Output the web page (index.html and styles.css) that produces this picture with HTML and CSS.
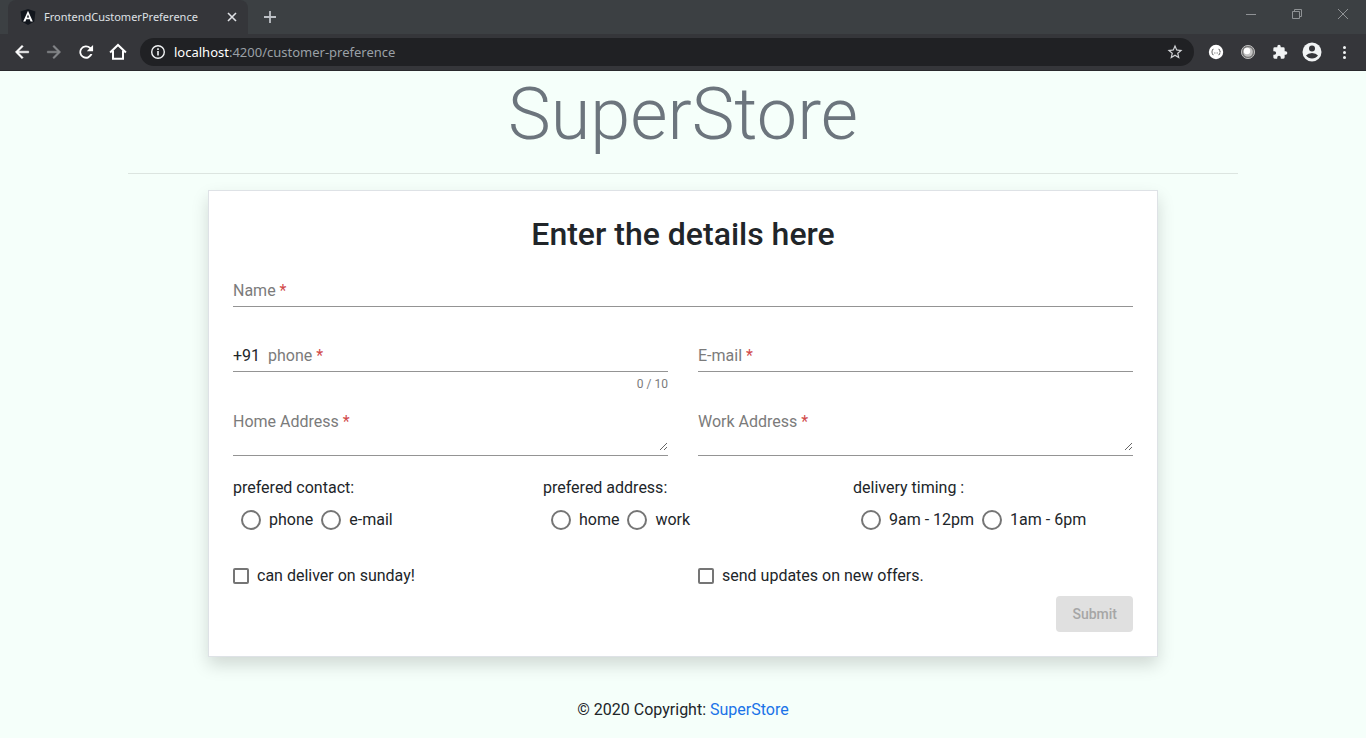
FILE: index.html
```html
<!DOCTYPE html>
<html lang="en">
<head>
<meta charset="utf-8">
<title>FrontendCustomerPreference</title>
<link rel="stylesheet" href="styles.css">
</head>
<body>
<header class="browser">
  <div class="tabstrip">
    <div class="tab">
      <svg class="favicon" viewBox="0 0 16 16" width="16" height="16" aria-hidden="true"><path d="M8 0l7.400 2.600-1.100 9.800L8 16l-6.300-3.600L.6 2.600z" fill="#12161d"/><path d="M8 1.800L3.200 12.400h2.200l.9-2.200h3.400l.9 2.200h2.200zM8 5.500l1.100 3H6.900z" fill="#fff"/></svg>
      <span class="tab-title">FrontendCustomerPreference</span>
      <button class="tab-close" aria-label="Close tab"><svg viewBox="0 0 16 16" width="16" height="16"><path d="M4 4l8 8M12 4l-8 8" stroke="#dfe1e5" stroke-width="1.600"/></svg></button>
    </div>
    <button class="new-tab" aria-label="New tab"><svg viewBox="0 0 16 16" width="16" height="16"><path d="M8 2v12M2 8h12" stroke="#bdc1c6" stroke-width="1.800"/></svg></button>
    <div class="window-controls">
      <button aria-label="Minimize"><svg viewBox="0 0 12 12" width="12" height="12"><path d="M1 6.500h10" stroke="#8f9295"/></svg></button>
      <button aria-label="Restore"><svg viewBox="0 0 12 12" width="12" height="12" fill="none" stroke="#8f9295"><path d="M1.500 3.500h7v7h-7zM3.500 3.500v-2h7v7h-2"/></svg></button>
      <button aria-label="Close"><svg viewBox="0 0 12 12" width="12" height="12"><path d="M1 1l10 10M11 1L1 11" stroke="#8f9295"/></svg></button>
    </div>
  </div>
  <div class="toolbar">
    <nav class="nav-buttons">
      <button aria-label="Back"><svg viewBox="0 0 24 24" width="20" height="20"><path fill="#fff" stroke="#fff" stroke-width=".6" d="M20 11H7.800l5.600-5.600L12 4l-8 8 8 8 1.400-1.400L7.800 13H20z"/></svg></button>
      <button aria-label="Forward"><svg viewBox="0 0 24 24" width="20" height="20"><path fill="#85878a" stroke="#85878a" stroke-width=".6" d="M12 4l-1.400 1.400 5.600 5.600H4v2h12.200l-5.600 5.600L12 20l8-8z"/></svg></button>
      <button aria-label="Reload"><svg viewBox="0 0 24 24" width="20" height="20"><path fill="#fff" d="M17.650 6.350A8 8 0 1 0 19.700 14.500h-2.500A5.800 5.800 0 1 1 16.100 7.900L13 11h7.500V3.500z"/></svg></button>
      <button aria-label="Home"><svg viewBox="0 0 24 24" width="20" height="20"><path fill="none" stroke="#fff" stroke-width="2.400" stroke-linejoin="miter" d="M2.500 12.500L12 3.500l9.500 9M6 10.500V20h12v-9.500"/></svg></button>
    </nav>
    <div class="omnibox">
      <svg viewBox="0 0 16 16" width="16" height="16" aria-hidden="true"><circle cx="8" cy="8" r="6.300" fill="none" stroke="#f1f3f4" stroke-width="1.400"/><path d="M8 7v4.500M8 4.300V6" stroke="#f1f3f4" stroke-width="1.600"/></svg>
      <span class="url"><span class="host">localhost</span>:4200/customer-preference</span>
      <button aria-label="Bookmark this tab"><svg viewBox="0 0 24 24" width="18" height="18"><path fill="#d2d4d7" d="M22 9.240l-7.190-.62L12 2 9.190 8.630 2 9.240l5.460 4.730L5.820 21 12 17.270 18.180 21l-1.630-7.030L22 9.240zM12 15.400l-3.760 2.270 1-4.280-3.320-2.880 4.380-.38L12 6.100l1.710 4.040 4.380.38-3.320 2.880 1 4.280L12 15.400z"/></svg></button>
    </div>
    <div class="extensions">
      <button aria-label="JSON viewer"><svg viewBox="0 0 16 16" width="16" height="16"><circle cx="8" cy="8" r="7.200" fill="#fff"/><path d="M5.500 5.200q-1.200 0-1.200 1.200v.8l-.8.8.8.8v.8q0 1.200 1.200 1.200M10.500 5.200q1.200 0 1.200 1.200v.8l.8.8-.8.8v.8q0 1.200-1.200 1.200" fill="none" stroke="#333" stroke-width=".8"/><path d="M6 9h4" stroke="#777" stroke-width=".8" stroke-dasharray="1 .5"/></svg></button>
      <button aria-label="Extension"><svg viewBox="0 0 16 16" width="16" height="16"><circle cx="8" cy="8" r="6.600" fill="#777" stroke="#b9b9b9"/><circle cx="8" cy="8" r="4.800" fill="#c4c4c4"/><circle cx="7" cy="7" r="3.200" fill="#fff"/></svg></button>
      <button aria-label="Extensions"><svg viewBox="0 0 24 24" width="16" height="16"><path fill="#f1f3f4" d="M20.500 11H19V7a2 2 0 0 0-2-2h-4V3.500a2.500 2.500 0 0 0-5 0V5H4a2 2 0 0 0-2 2v3.800h1.500a2.700 2.700 0 0 1 0 5.400H2V20a2 2 0 0 0 2 2h3.800v-1.500a2.700 2.700 0 0 1 5.400 0V22H17a2 2 0 0 0 2-2v-4h1.500a2.500 2.500 0 0 0 0-5z"/></svg></button>
      <button aria-label="Profile"><svg viewBox="0 0 20 20" width="20" height="20"><circle cx="10" cy="10" r="9.500" fill="#f1f3f4"/><circle cx="10" cy="6.500" r="3" fill="#35363a"/><path d="M4 13.500q2-2.500 6-2.500t6 2.500q-2.200 3-6 3t-6-3z" fill="#35363a"/></svg></button>
      <button aria-label="Menu"><svg viewBox="0 0 16 16" width="16" height="16" fill="#f1f3f4"><circle cx="8.500" cy="3.500" r="1.500"/><circle cx="8.500" cy="8.500" r="1.500"/><circle cx="8.500" cy="13.500" r="1.500"/></svg></button>
    </div>
  </div>
</header>

<main class="container">
  <h1 class="brand">SuperStore</h1>
  <hr class="rule">
  <form class="card">
    <h2 class="card-title">Enter the details here</h2>

    <div class="field">
      <div class="control">
        <label for="name">Name <span class="required">*</span></label>
        <input id="name" type="text">
      </div>
    </div>

    <div class="halves">
      <div class="field">
        <div class="control with-prefix">
          <span class="prefix">+91</span>
          <label for="phone">phone <span class="required">*</span></label>
          <input id="phone" type="tel" maxlength="10">
        </div>
        <div class="hint">0 / 10</div>
      </div>
      <div class="field">
        <div class="control">
          <label for="email">E-mail <span class="required">*</span></label>
          <input id="email" type="email">
        </div>
      </div>
    </div>

    <div class="halves">
      <div class="field">
        <div class="control area">
          <label for="home-address">Home Address <span class="required">*</span></label>
          <textarea id="home-address" rows="2"></textarea>
        </div>
      </div>
      <div class="field">
        <div class="control area">
          <label for="work-address">Work Address <span class="required">*</span></label>
          <textarea id="work-address" rows="2"></textarea>
        </div>
      </div>
    </div>

    <div class="thirds">
      <fieldset class="choices">
        <legend>prefered contact:</legend>
        <div class="options">
          <label class="option"><input type="radio" name="contact">phone</label>
          <label class="option"><input type="radio" name="contact">e-mail</label>
        </div>
      </fieldset>
      <fieldset class="choices">
        <legend>prefered address:</legend>
        <div class="options">
          <label class="option"><input type="radio" name="address">home</label>
          <label class="option"><input type="radio" name="address">work</label>
        </div>
      </fieldset>
      <fieldset class="choices">
        <legend>delivery timing :</legend>
        <div class="options">
          <label class="option"><input type="radio" name="timing">9am - 12pm</label>
          <label class="option"><input type="radio" name="timing">1am - 6pm</label>
        </div>
      </fieldset>
    </div>

    <div class="halves checks">
      <label class="option"><input type="checkbox">can deliver on sunday!</label>
      <label class="option"><input type="checkbox">send updates on new offers.</label>
    </div>

    <div class="actions">
      <button class="submit" type="submit" disabled>Submit</button>
    </div>
  </form>
</main>

<footer class="footer">© 2020 Copyright: <a href="#">SuperStore</a></footer>
</body>
</html>
```
FILE: styles.css
```css
* {
  box-sizing: border-box;
}

body {
  margin: 0;
  min-height: 100vh;
  background: #f5fffa;
  color: #212529;
  font-family: Roboto, "Liberation Sans", sans-serif;
  font-size: 16px;
  line-height: 24px;
}

button,
input,
textarea {
  font: inherit;
  color: inherit;
}

/* Browser window frame */
.browser {
  background: #35363a;
  border-bottom: 1px solid #28292c;
  font-family: "Noto Sans", sans-serif;
}

.browser button {
  display: flex;
  align-items: center;
  justify-content: center;
  padding: 0;
  border: 0;
  background: none;
}

.tabstrip {
  display: flex;
  align-items: stretch;
  height: 34px;
  padding-left: 8px;
  background: #3c4043;
}

.tab {
  display: flex;
  align-items: center;
  width: 240px;
  padding: 0 8px 0 12px;
  background: #35363a;
  border-radius: 8px 8px 0 0;
  color: #dfe1e5;
  font-size: 11px;
}

.tab-title {
  flex: 1;
  margin-left: 8px;
  white-space: nowrap;
}

.new-tab {
  width: 44px;
}

.window-controls {
  display: flex;
  align-items: center;
  height: 28px;
  margin-left: auto;
}

.window-controls button {
  width: 46px;
}

.toolbar {
  display: flex;
  align-items: center;
  height: 36px;
}

.nav-buttons {
  display: flex;
  padding: 0 6px;
}

.nav-buttons button {
  width: 32px;
}

.omnibox {
  display: flex;
  align-items: center;
  flex: 1;
  height: 28px;
  padding: 0 10px;
  border-radius: 14px;
  background: #202124;
  color: #9aa0a6;
  font-size: 13px;
}

.url {
  flex: 1;
  margin-left: 8px;
}

.host {
  color: #fff;
}

.extensions {
  display: flex;
  align-items: center;
  padding: 0 6px;
}

.extensions button {
  width: 32px;
}

/* Page */
.container {
  max-width: 1110px;
  margin: 0 auto;
}

.brand {
  margin: 0;
  color: #6c757d;
  font-size: 72px;
  font-weight: 300;
  line-height: 88px;
  text-align: center;
}

.rule {
  margin: 14px 0 16px;
  border: 0;
  border-top: 1px solid rgba(0, 0, 0, .1);
}

.card {
  margin: 0 80px;
  padding: 24px;
  border: 1px solid #dee2e6;
  background: #fff;
  box-shadow: 0 8px 16px rgba(0, 0, 0, .15);
}

.card-title {
  margin: 0 0 8px;
  font-size: 32px;
  font-weight: 500;
  line-height: 38px;
  text-align: center;
}

.halves,
.thirds {
  display: grid;
  grid-template-columns: repeat(2, 1fr);
  column-gap: 30px;
}

.thirds {
  grid-template-columns: repeat(3, 1fr);
}

/* Underlined field; the label rests over the empty input */
.field {
  display: grid;
  grid-template-rows: auto 19px;
}

.halves .field {
  grid-template-rows: auto 20px;
}

.control {
  display: grid;
  padding: 21px 0 6px;
  border-bottom: 1px solid #949494;
  line-height: 18px;
}

.with-prefix {
  grid-template-columns: auto 1fr;
  column-gap: 8px;
}

.control label,
.control input,
.control textarea {
  grid-row: 1;
  grid-column: -2 / -1;
}

.control label {
  z-index: 1;
  align-self: start;
  justify-self: start;
  color: #7b7b7b;
  pointer-events: none;
}

.control input,
.control textarea {
  width: 100%;
  height: 18px;
  padding: 0;
  border: 0;
  outline: 0;
  background: none;
}

.control.area {
  padding-bottom: 4px;
}

.control textarea {
  height: 38px;
  resize: vertical;
}

.required {
  color: #d14a4a;
}

.hint {
  padding-top: 3px;
  color: #7b7b7b;
  font-size: 12px;
  line-height: 18px;
  text-align: right;
}

.choices {
  min-width: 0;
  margin: 0;
  padding: 0;
  border: 0;
}

.choices legend {
  padding: 0;
}

.options {
  display: flex;
  gap: 8px;
  padding: 8px 0 0 8px;
}

.option {
  display: flex;
  align-items: center;
  gap: 8px;
}

.option input {
  width: 20px;
  height: 20px;
  margin: 0;
  appearance: none;
  border: 2px solid #757575;
  border-radius: 50%;
  background: #fff;
}

.option input[type="checkbox"] {
  width: 16px;
  height: 16px;
  border-radius: 2px;
}

.option input:checked {
  background: #757575;
}

.checks {
  margin: 32px 0 8px;
}

.actions {
  display: flex;
  justify-content: flex-end;
}

.submit {
  padding: 0 16px;
  border: 0;
  border-radius: 4px;
  background: #e0e0e0;
  color: #a6a6a6;
  font-size: 14px;
  font-weight: 500;
  line-height: 36px;
}

.footer {
  padding: 41px 16px 16px;
  text-align: center;
}

.footer a {
  color: #1a73e8;
  text-decoration: none;
}
```
